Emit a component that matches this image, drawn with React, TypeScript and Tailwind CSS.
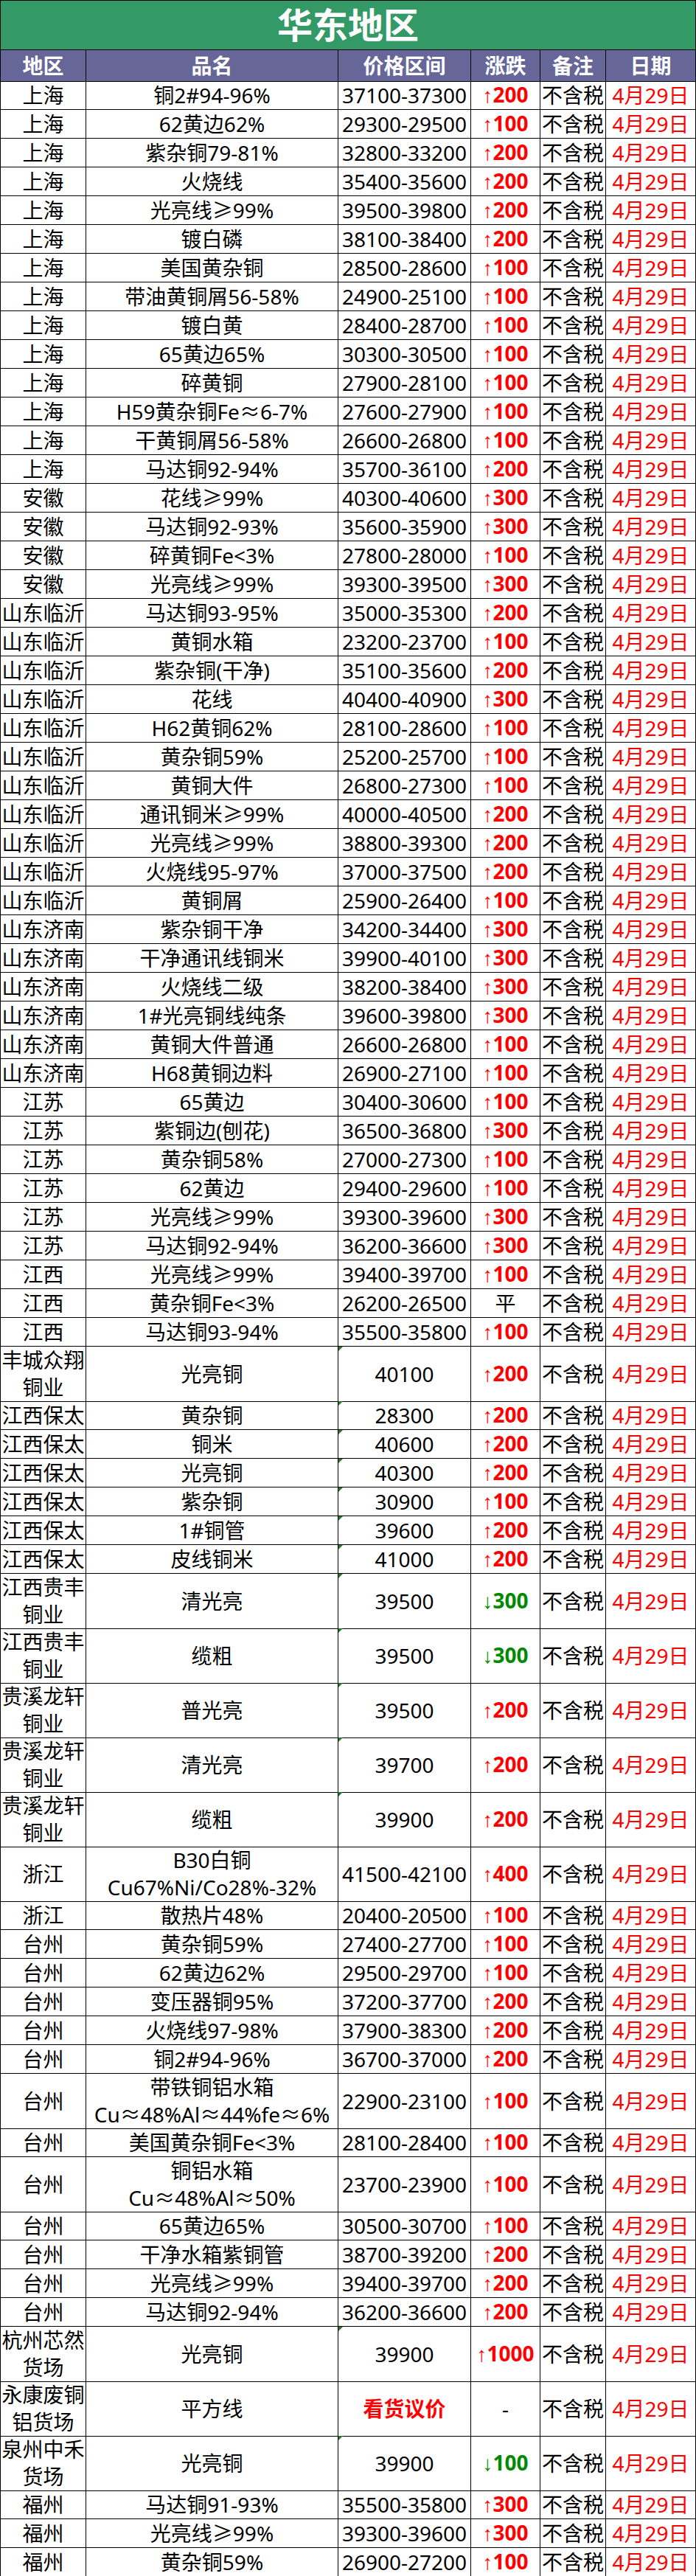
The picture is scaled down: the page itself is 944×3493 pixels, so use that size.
import React from 'react';

type Row = [string, string, string, string, number?, number?];

// region, name, price, change (u=up, d=down), tall row, green corner mark
const rows: Row[] = [
  ['上海', '铜2#94-96%', '37100-37300', 'u200'],
  ['上海', '62黄边62%', '29300-29500', 'u100'],
  ['上海', '紫杂铜79-81%', '32800-33200', 'u200'],
  ['上海', '火烧线', '35400-35600', 'u200'],
  ['上海', '光亮线≥99%', '39500-39800', 'u200'],
  ['上海', '镀白磷', '38100-38400', 'u200'],
  ['上海', '美国黄杂铜', '28500-28600', 'u100'],
  ['上海', '带油黄铜屑56-58%', '24900-25100', 'u100'],
  ['上海', '镀白黄', '28400-28700', 'u100'],
  ['上海', '65黄边65%', '30300-30500', 'u100'],
  ['上海', '碎黄铜', '27900-28100', 'u100'],
  ['上海', 'H59黄杂铜Fe≈6-7%', '27600-27900', 'u100'],
  ['上海', '干黄铜屑56-58%', '26600-26800', 'u100'],
  ['上海', '马达铜92-94%', '35700-36100', 'u200'],
  ['安徽', '花线≥99%', '40300-40600', 'u300'],
  ['安徽', '马达铜92-93%', '35600-35900', 'u300'],
  ['安徽', '碎黄铜Fe<3%', '27800-28000', 'u100'],
  ['安徽', '光亮线≥99%', '39300-39500', 'u300'],
  ['山东临沂', '马达铜93-95%', '35000-35300', 'u200'],
  ['山东临沂', '黄铜水箱', '23200-23700', 'u100'],
  ['山东临沂', '紫杂铜(干净)', '35100-35600', 'u200'],
  ['山东临沂', '花线', '40400-40900', 'u300'],
  ['山东临沂', 'H62黄铜62%', '28100-28600', 'u100'],
  ['山东临沂', '黄杂铜59%', '25200-25700', 'u100'],
  ['山东临沂', '黄铜大件', '26800-27300', 'u100'],
  ['山东临沂', '通讯铜米≥99%', '40000-40500', 'u200'],
  ['山东临沂', '光亮线≥99%', '38800-39300', 'u200'],
  ['山东临沂', '火烧线95-97%', '37000-37500', 'u200'],
  ['山东临沂', '黄铜屑', '25900-26400', 'u100'],
  ['山东济南', '紫杂铜干净', '34200-34400', 'u300'],
  ['山东济南', '干净通讯线铜米', '39900-40100', 'u300'],
  ['山东济南', '火烧线二级', '38200-38400', 'u300'],
  ['山东济南', '1#光亮铜线纯条', '39600-39800', 'u300'],
  ['山东济南', '黄铜大件普通', '26600-26800', 'u100'],
  ['山东济南', 'H68黄铜边料', '26900-27100', 'u100'],
  ['江苏', '65黄边', '30400-30600', 'u100'],
  ['江苏', '紫铜边(刨花)', '36500-36800', 'u300'],
  ['江苏', '黄杂铜58%', '27000-27300', 'u100'],
  ['江苏', '62黄边', '29400-29600', 'u100'],
  ['江苏', '光亮线≥99%', '39300-39600', 'u300'],
  ['江苏', '马达铜92-94%', '36200-36600', 'u300'],
  ['江西', '光亮线≥99%', '39400-39700', 'u100'],
  ['江西', '黄杂铜Fe<3%', '26200-26500', '平'],
  ['江西', '马达铜93-94%', '35500-35800', 'u100'],
  ['丰城众翔铜业', '光亮铜', '40100', 'u200', 1, 1],
  ['江西保太', '黄杂铜', '28300', 'u200', 0, 1],
  ['江西保太', '铜米', '40600', 'u200', 0, 1],
  ['江西保太', '光亮铜', '40300', 'u200', 0, 1],
  ['江西保太', '紫杂铜', '30900', 'u100', 0, 1],
  ['江西保太', '1#铜管', '39600', 'u200', 0, 1],
  ['江西保太', '皮线铜米', '41000', 'u200', 0, 1],
  ['江西贵丰铜业', '清光亮', '39500', 'd300', 1, 1],
  ['江西贵丰铜业', '缆粗', '39500', 'd300', 1, 1],
  ['贵溪龙轩铜业', '普光亮', '39500', 'u200', 1, 1],
  ['贵溪龙轩铜业', '清光亮', '39700', 'u200', 1, 1],
  ['贵溪龙轩铜业', '缆粗', '39900', 'u200', 1, 1],
  ['浙江', 'B30白铜\nCu67%Ni/Co28%-32%', '41500-42100', 'u400', 1],
  ['浙江', '散热片48%', '20400-20500', 'u100'],
  ['台州', '黄杂铜59%', '27400-27700', 'u100'],
  ['台州', '62黄边62%', '29500-29700', 'u100'],
  ['台州', '变压器铜95%', '37200-37700', 'u200'],
  ['台州', '火烧线97-98%', '37900-38300', 'u200'],
  ['台州', '铜2#94-96%', '36700-37000', 'u200'],
  ['台州', '带铁铜铝水箱\nCu≈48%Al≈44%fe≈6%', '22900-23100', 'u100', 1],
  ['台州', '美国黄杂铜Fe<3%', '28100-28400', 'u100'],
  ['台州', '铜铝水箱\nCu≈48%Al≈50%', '23700-23900', 'u100', 1],
  ['台州', '65黄边65%', '30500-30700', 'u100'],
  ['台州', '干净水箱紫铜管', '38700-39200', 'u200'],
  ['台州', '光亮线≥99%', '39400-39700', 'u200'],
  ['台州', '马达铜92-94%', '36200-36600', 'u200'],
  ['杭州芯然货场', '光亮铜', '39900', 'u1000', 1, 1],
  ['永康废铜铝货场', '平方线', '看货议价', '-', 1],
  ['泉州中禾货场', '光亮铜', '39900', 'd100', 1, 1],
  ['福州', '马达铜91-93%', '35500-35800', 'u300'],
  ['福州', '光亮线≥99%', '39300-39600', 'u300'],
  ['福州', '黄杂铜59%', '26900-27200', 'u100'],
];

const grid = 'grid grid-cols-[117px_342px_180px_94px_89px_122px]';
const cell = 'flex items-center justify-center text-center border-r border-b border-black';

const Change: React.FC<{ c: string }> = ({ c }) => {
  if (c === '平' || c === '-') return <span>{c}</span>;
  const up = c[0] === 'u';
  return (
    <span className={up ? 'text-[#ff0000]' : 'text-[#008a00]'}>
      <span className="font-['Liberation_Sans',sans-serif] font-normal">{up ? '↑' : '↓'}</span>
      <span className="font-bold">{c.slice(1)}</span>
    </span>
  );
};

export default function App() {
  return (
    <div className="w-[944px] bg-white text-black font-['Noto_Sans','Noto_Sans_CJK_SC',sans-serif] text-[28px]">
      {/* Title */}
      <div className="h-[68px] flex items-center justify-center bg-[#339966] border border-black text-white font-bold text-[48px] leading-none">
        华东地区
      </div>

      {/* Header */}
      <div className={`${grid} h-[42px] bg-[#666699] text-white font-bold`}>
        {['地区', '品名', '价格区间', '涨跌', '备注', '日期'].map((h, i) => (
          <div key={h} className={`${cell} ${i === 0 ? 'border-l' : ''}`}>
            {h}
          </div>
        ))}
      </div>

      {/* Rows */}
      {rows.map(([region, name, price, change, tall, mark], i) => (
        <div key={i} className={`${grid} ${tall ? 'h-[74px] leading-[37px]' : 'h-[39px] leading-none'}`}>
          <div className={`${cell} border-l`}>{region}</div>
          <div className={`${cell} whitespace-pre-line`}>{name}</div>
          <div className={`${cell} relative ${price === '看货议价' ? 'text-[#ff0000] font-bold' : ''}`}>
            {mark ? (
              <span className="absolute top-0 left-0 w-0 h-0 border-t-[6px] border-t-[#1d7a2b] border-r-[6px] border-r-transparent" />
            ) : null}
            {price}
          </div>
          <div className={cell}>
            <Change c={change} />
          </div>
          <div className={cell}>不含税</div>
          <div className={`${cell} text-[#ff0000]`}>4月29日</div>
        </div>
      ))}
    </div>
  );
}
